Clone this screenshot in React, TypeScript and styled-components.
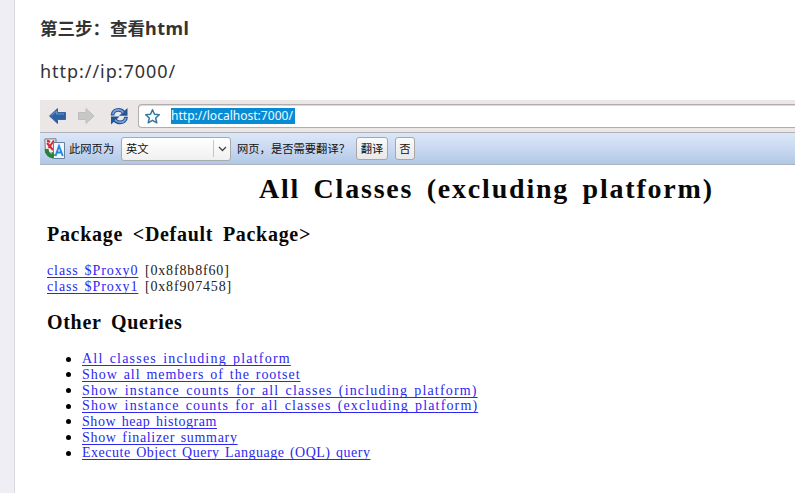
import React from "react";
import styled, { createGlobalStyle } from "styled-components";

const GlobalStyle = createGlobalStyle`
  * { box-sizing: border-box; }
  body { margin: 0; background: #fff; overflow: hidden; }
`;

const Page = styled.div`
  display: flex;
  width: 795px;
  height: 493px;
  overflow: hidden;
  background: #fff;
`;

const Gutter = styled.div`
  flex: 0 0 15px;
  background: #efeef4;
  border-right: 1px solid #dbdbdf;
`;

const Article = styled.main`
  flex: 1;
  min-width: 0;
  padding: 15px 0 0 25px;
  display: flex;
  flex-direction: column;
`;

const Paragraph = styled.p<{ $bold?: boolean; $gap: number }>`
  margin: 0 0 ${(p) => p.$gap}px;
  height: 27px;
  line-height: 27px;
  font-family: "Noto Sans", "Noto Sans CJK SC", sans-serif;
  font-size: ${(p) => (p.$bold ? 17.5 : 18)}px;
  font-weight: ${(p) => (p.$bold ? 700 : 400)};
  letter-spacing: ${(p) => (p.$bold ? 0 : 0.95)}px;
  color: #333;
  white-space: nowrap;
`;

const Latin = styled.span`
  font-size: 18px;
  letter-spacing: 0.5px;
`;

const Toolbar = styled.header`
  display: flex;
  align-items: center;
  height: 32px;
  background: #ebe7e7;
`;

const ToolIcon = styled.svg`
  flex: none;
  display: block;
`;

const NavIcons = styled.div`
  display: flex;
  width: 98px;
  height: 32px;
`;

const AddressBox = styled.div`
  flex: 1;
  height: 24px;
  display: flex;
  align-items: center;
  background: #fff;
  border: 1px solid #b3acac;
  border-right: 0;
  border-radius: 4px 0 0 4px;
  box-shadow: inset 0 1px 0 #ddd9d9;
  padding-left: 5px;
`;

const Url = styled.span`
  margin-left: 10px;
  height: 16px;
  line-height: 16px;
  width: 124px;
  background: #078bd5;
  color: #f3fbff;
  font-family: "Noto Sans", sans-serif;
  font-size: 12px;
  letter-spacing: 0.02px;
  white-space: nowrap;
`;

const TranslateBar = styled.div`
  display: flex;
  align-items: center;
  height: 33px;
  padding-left: 4px;
  border-top: 1px solid #b0b1b6;
  border-bottom: 1px solid #aeb4bc;
  background: linear-gradient(#dce7f8, #c9d9f1 50%, #b0c8e6);
  font-family: "Noto Sans CJK SC", sans-serif;
  font-size: 11.3px;
  line-height: 16px;
  color: #111;
  white-space: nowrap;
`;

const BarText = styled.span`
  display: block;
  padding-bottom: 2px;
`;

const Label = styled(BarText)<{ $width: number; $left: number }>`
  width: ${(p) => p.$width}px;
  margin-left: ${(p) => p.$left}px;
`;

const LanguageSelect = styled.div`
  display: flex;
  align-items: center;
  width: 110px;
  height: 24px;
  padding-left: 4px;
  border: 1px solid #aaa9ab;
  border-radius: 3px;
  background: linear-gradient(#fff, #f1f0f0);
`;

const SelectArrow = styled.span`
  display: flex;
  align-items: center;
  justify-content: center;
  width: 17px;
  height: 17px;
  margin-left: auto;
  border-left: 1px solid #c6c4c4;
`;

const BarButton = styled.button<{ $width: number; $left: number }>`
  width: ${(p) => p.$width}px;
  height: 23px;
  margin: 0 0 0 ${(p) => p.$left}px;
  padding: 0;
  border: 1px solid #aaa6a6;
  border-radius: 3px;
  background: linear-gradient(#fbfbfb, #e9e7e7);
  font: inherit;
  color: inherit;
`;

const Report = styled.section`
  padding-left: 7px;
  font-family: "Liberation Serif", serif;
  color: #080808;
  white-space: nowrap;
`;

const Title = styled.h1`
  margin: 6px 0 0 212px;
  height: 36px;
  line-height: 36px;
  font-size: 28px;
  letter-spacing: 1.8px;
  word-spacing: 4.6px;
`;

const Section = styled.h2<{ $top: number; $spacing: number }>`
  margin: ${(p) => p.$top}px 0 0;
  height: 26px;
  line-height: 26px;
  font-size: 20px;
  letter-spacing: ${(p) => p.$spacing}px;
  word-spacing: 4.1px;
`;

const ClassList = styled.div`
  margin-top: 16px;
`;

const ClassRow = styled.div`
  display: flex;
  gap: 6.5px;
  height: 15.7px;
  line-height: 16px;
  font-size: 14px;
  letter-spacing: 0.85px;
  color: #222;
`;

const Link = styled.a<{ $spacing?: number }>`
  color: #2c28f0;
  letter-spacing: ${(p) => p.$spacing ?? 0.9}px;
  word-spacing: 1.5px;
  text-decoration: underline;
  text-decoration-thickness: 1px;
  text-underline-offset: 2px;
  text-decoration-skip-ink: none;
`;

const QueryList = styled.ul`
  list-style: none;
  margin: 16px 0 0;
  padding: 0 0 0 19px;
`;

const QueryItem = styled.li`
  display: flex;
  align-items: center;
  gap: 11px;
  height: 15.7px;
  line-height: 16px;
  font-size: 14px;
`;

const Bullet = styled.span`
  width: 5px;
  height: 5px;
  border-radius: 50%;
  background: #000;
`;

const classes = [
  { name: "class $Proxy0", address: "[0x8f8b8f60]" },
  { name: "class $Proxy1", address: "[0x8f907458]" },
];

const queries = [
  { text: "All classes including platform", spacing: 1.2 },
  { text: "Show all members of the rootset", spacing: 0.95 },
  { text: "Show instance counts for all classes (including platform)", spacing: 1.17 },
  { text: "Show instance counts for all classes (excluding platform)", spacing: 1.14 },
  { text: "Show heap histogram", spacing: 0.56 },
  { text: "Show finalizer summary", spacing: 0.68 },
  { text: "Execute Object Query Language (OQL) query", spacing: 0.51 },
];

function Navigation() {
  return (
    <ToolIcon width="98" height="32" viewBox="0 0 98 32">
      <path d="M9.5 16 17.5 8.5V12.5H25.5V19.5H17.5V23.5Z" fill="#2d61a7" stroke="#3c659c" strokeLinejoin="round" />
      <path d="M11.5 15.5 16.5 11V14H24" fill="none" stroke="#6b97cd" />
      <path d="M54 16 46 8.5V12.5H38.5V19.5H46V23.5Z" fill="#c9c8c9" stroke="#bfbebf" strokeLinejoin="round" />
      <path d="M72.500 15.500C72.500 11.500 75.500 9.800 78.500 9.800c2.200 0 3.800.8 5 2.400" fill="none" stroke="#255494" strokeWidth="3.800" />
      <path d="M87.500 8v7.800h-8.500Z" fill="#255494" />
      <path d="M86 16.800C86 20.800 83 22.400 80 22.400c-2.200 0-3.800-.8-5-2.400" fill="none" stroke="#255494" strokeWidth="3.800" />
      <path d="M71 24.500V16.500h8.500Z" fill="#255494" />
      <path d="M72.800 14.300c.6-3 3-4.400 5.700-4.400 2.200 0 3.800 1 5 2.600M85.800 18c-.6 3-3 4.300-5.800 4.300-2.200 0-3.800-1-5-2.600" fill="none" stroke="#7aa4d8" strokeWidth="1.600" />
    </ToolIcon>
  );
}

function Star() {
  return (
    <ToolIcon width="17" height="17" viewBox="0 0 17 17">
      <path d="M8.500 1.800 10.500 6.300 15.300 6.800 11.700 10 12.800 14.800 8.500 12.300 4.200 14.800 5.300 10 1.700 6.800 6.500 6.300Z" fill="#f5fafc" stroke="#39759c" strokeWidth="1.500" strokeLinejoin="round" />
    </ToolIcon>
  );
}

function TranslateIcon() {
  return (
    <ToolIcon width="22" height="22" viewBox="0 0 22 22">
      <path d="M.8 1 12 .8V15H1.500Z" fill="#f4eeee" stroke="#777" />
      <path d="M3 5 9 12M10 2.500 4.500 10M3 2.500l3 1.500" stroke="#d52838" strokeWidth="2" fill="none" />
      <path d="M2.500 11C3 16 5.500 18.800 10 18" fill="none" stroke="#27833a" strokeWidth="4" />
      <path d="M9.500 4.500H20.500V20.500H9.500Z" fill="#eef6ff" stroke="#67809b" />
      <path d="M11.500 18 15 8 18.800 18M12.800 14.500H17.500" stroke="#2888e0" strokeWidth="1.900" fill="none" />
      <path d="M8 13.800 11 17 8 21Z" fill="#27833a" />
    </ToolIcon>
  );
}

export default function App() {
  return (
    <Page>
      <GlobalStyle />
      <Gutter />
      <Article>
        <Paragraph $bold $gap={16}>第三步：查看<Latin>html</Latin></Paragraph>
        <Paragraph $gap={15}>http://ip:7000/</Paragraph>
        <Toolbar>
          <NavIcons>
            <Navigation />
          </NavIcons>
          <AddressBox>
            <Star />
            <Url>http://localhost:7000/</Url>
          </AddressBox>
        </Toolbar>
        <TranslateBar>
          <TranslateIcon />
          <Label $width={52} $left={3}>此网页为</Label>
          <LanguageSelect>
            <BarText>英文</BarText>
            <SelectArrow>
              <ToolIcon width="9" height="6" viewBox="0 0 9 6">
                <path d="M1 1 4.500 4.500 8 1" fill="none" stroke="#444" strokeWidth="1.300" />
              </ToolIcon>
            </SelectArrow>
          </LanguageSelect>
          <Label $width={113} $left={6}>网页，是否需要翻译？</Label>
          <BarButton $width={32} $left={6}><BarText>翻译</BarText></BarButton>
          <BarButton $width={20} $left={7}><BarText>否</BarText></BarButton>
        </TranslateBar>
        <Report>
          <Title>All Classes (excluding platform)</Title>
          <Section $top={14} $spacing={0.7}>Package &lt;Default Package&gt;</Section>
          <ClassList>
            {classes.map((item) => (
              <ClassRow key={item.name}>
                <Link>{item.name}</Link>
                <span>{item.address}</span>
              </ClassRow>
            ))}
          </ClassList>
          <Section $top={15} $spacing={0.7}>Other Queries</Section>
          <QueryList>
            {queries.map((query) => (
              <QueryItem key={query.text}>
                <Bullet />
                <Link $spacing={query.spacing}>{query.text}</Link>
              </QueryItem>
            ))}
          </QueryList>
        </Report>
      </Article>
    </Page>
  );
}
